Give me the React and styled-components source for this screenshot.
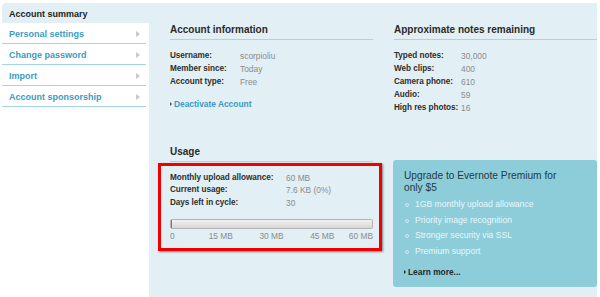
import styled, { createGlobalStyle } from "styled-components";

const GlobalStyle = createGlobalStyle`
  body {
    margin: 0;
    background: #ffffff;
    font-family: "Liberation Sans", Arial, sans-serif;
  }
`;

const accountRows = [
  ["Username:", "scorpioliu"],
  ["Member since:", "Today"],
  ["Account type:", "Free"],
];

const noteRows = [
  ["Typed notes:", "30,000"],
  ["Web clips:", "400"],
  ["Camera phone:", "610"],
  ["Audio:", "59"],
  ["High res photos:", "16"],
];

const usageRows = [
  ["Monthly upload allowance:", "60 MB"],
  ["Current usage:", "7.6 KB (0%)"],
  ["Days left in cycle:", "30"],
];

const scale = ["0", "15 MB", "30 MB", "45 MB", "60 MB"];

const perks = [
  "1GB monthly upload allowance",
  "Priority image recognition",
  "Stronger security via SSL",
  "Premium support",
];

const menu = [
  "Personal settings",
  "Change password",
  "Import",
  "Account sponsorship",
];

export default function App() {
  return (
    <Page>
      <GlobalStyle />
      <Sidebar>
        <SideHeader>Account summary</SideHeader>
        {menu.map((item) => (
          <SideItem key={item}>
            {item}
            <Chevron />
          </SideItem>
        ))}
      </Sidebar>
      <Main>
        <Section>
          <Heading>Account information</Heading>
          <Rows>
            {accountRows.map(([k, v]) => (
              <Row key={k} labelWidth={70}>
                <Label>{k}</Label>
                <Value>{v}</Value>
              </Row>
            ))}
          </Rows>
          <LinkLine>
            <Tri />
            Deactivate Account
          </LinkLine>
        </Section>
        <Section>
          <Heading>Approximate notes remaining</Heading>
          <Rows>
            {noteRows.map(([k, v]) => (
              <Row key={k} labelWidth={67}>
                <Label>{k}</Label>
                <Value>{v}</Value>
              </Row>
            ))}
          </Rows>
        </Section>
        <Section>
          <Heading>Usage</Heading>
          <Highlight>
            {usageRows.map(([k, v]) => (
              <Row key={k} labelWidth={116} tight>
                <Label>{k}</Label>
                <Value>{v}</Value>
              </Row>
            ))}
            <Bar>
              <BarFill />
            </Bar>
            <Scale>
              {scale.map((s, i) => (
                <Tick key={s} pos={i * 25}>
                  {s}
                </Tick>
              ))}
            </Scale>
          </Highlight>
        </Section>
        <Promo>
          <PromoTitle>Upgrade to Evernote Premium for only $5</PromoTitle>
          <PerkList>
            {perks.map((p) => (
              <Perk key={p}>{p}</Perk>
            ))}
          </PerkList>
          <LearnMore>
            <Tri dark />
            Learn more...
          </LearnMore>
        </Promo>
      </Main>
    </Page>
  );
}

const Page = styled.div`
  display: flex;
  align-items: stretch;
  height: 297px;
  padding: 3px 3px 0 2px;
  box-sizing: border-box;
  overflow: hidden;
`;

const Sidebar = styled.div`
  width: 147px;
  flex: none;
  display: flex;
  flex-direction: column;
`;

const SideHeader = styled.div`
  height: 20px;
  line-height: 22px;
  padding-left: 7px;
  background: #e2eff5;
  border-top-left-radius: 4px;
  font-size: 9px;
  font-weight: bold;
  color: #222;
`;

const SideItem = styled.div`
  position: relative;
  height: 20px;
  line-height: 22px;
  margin-right: 3px;
  padding-left: 7px;
  border-bottom: 1px solid #a4d6e6;
  font-size: 9px;
  font-weight: bold;
  color: #3a9bc4;
`;

const Chevron = styled.span`
  position: absolute;
  right: 6px;
  top: 8px;
  width: 0;
  height: 0;
  border-top: 3px solid transparent;
  border-bottom: 3px solid transparent;
  border-left: 4px solid #c8c8c8;
`;

const Main = styled.div`
  flex: 1;
  background: #e2eff5;
  display: grid;
  grid-template-columns: 203px 203px;
  grid-template-rows: 122px auto;
  column-gap: 21px;
  align-items: start;
  padding: 21px 0 0 21px;
`;

const Section = styled.div`
  display: flex;
  flex-direction: column;
`;

const Heading = styled.div`
  font-size: 10px;
  font-weight: bold;
  color: #2b2b2b;
  line-height: 12px;
  padding-bottom: 3px;
  border-bottom: 1px solid #a4d6e6;
`;

const Rows = styled.div`
  margin-top: 10px;
  display: flex;
  flex-direction: column;
`;

const Row = styled.div`
  display: grid;
  grid-template-columns: ${({ labelWidth }) => labelWidth}px 1fr;
  font-size: 8.4px;
  line-height: ${({ tight }) => (tight ? "12.5px" : "12.9px")};
  white-space: nowrap;
`;

const Label = styled.span`
  font-weight: bold;
  color: #2e2e2e;
  font-size: 8.2px;
  letter-spacing: -0.05px;
`;

const Value = styled.span`
  color: #8c8c8c;
`;

const Tri = styled.span`
  display: inline-block;
  width: 0;
  height: 0;
  margin-right: 2px;
  vertical-align: 1px;
  border-top: 2px solid transparent;
  border-bottom: 2px solid transparent;
  border-left: 2px solid ${({ dark }) => (dark ? "#222" : "#555")};
`;

const LinkLine = styled.div`
  margin-top: 9px;
  font-size: 8.4px;
  line-height: 12px;
  font-weight: bold;
  color: #3a9bc4;
`;

const Highlight = styled.div`
  margin: 1px -9px 0 -12px;
  padding: 5.5px 6px 6px 9px;
  border: 3px solid #f00000;
  box-shadow: 1px 1px 2px rgba(0, 0, 0, 0.45);
`;

const Bar = styled.div`
  margin-top: 10px;
  height: 8px;
  border: 1px solid #b4b4b4;
  border-radius: 2px;
  background: linear-gradient(#f2f2f2, #d6d6d6);
`;

const BarFill = styled.div`
  width: 1px;
  height: 100%;
  background: #7a7a7a;
`;

const Scale = styled.div`
  position: relative;
  margin-top: 1px;
  height: 12px;
  font-size: 8.4px;
  line-height: 12px;
  color: #8c8c8c;
`;

const Tick = styled.span`
  position: absolute;
  top: 0;
  white-space: nowrap;
  left: ${({ pos }) => pos}%;
  transform: translateX(
    ${({ pos }) => (pos === 0 ? "0" : pos === 100 ? "-100%" : "-50%")}
  );
`;

const Promo = styled.div`
  margin: 14px 0 0 -1px;
  padding: 10px 10px 9px 11px;
  background: #8ccdd9;
  border-radius: 3px;
`;

const PromoTitle = styled.div`
  font-size: 10.2px;
  line-height: 12px;
  color: #263845;
  width: 165px;
`;

const PerkList = styled.ul`
  list-style: none;
  margin: 3px 0 0;
  padding: 0;
`;

const Perk = styled.li`
  position: relative;
  padding-left: 11px;
  font-size: 8.6px;
  line-height: 15.5px;
  color: #eaf6f9;

  &::before {
    content: "";
    position: absolute;
    left: 1px;
    top: 6px;
    width: 2px;
    height: 2px;
    border: 1px solid #d2ecf1;
    border-radius: 50%;
  }
`;

const LearnMore = styled.div`
  margin-top: 7px;
  font-size: 8.4px;
  line-height: 12px;
  font-weight: bold;
  color: #1f2a33;
`;
